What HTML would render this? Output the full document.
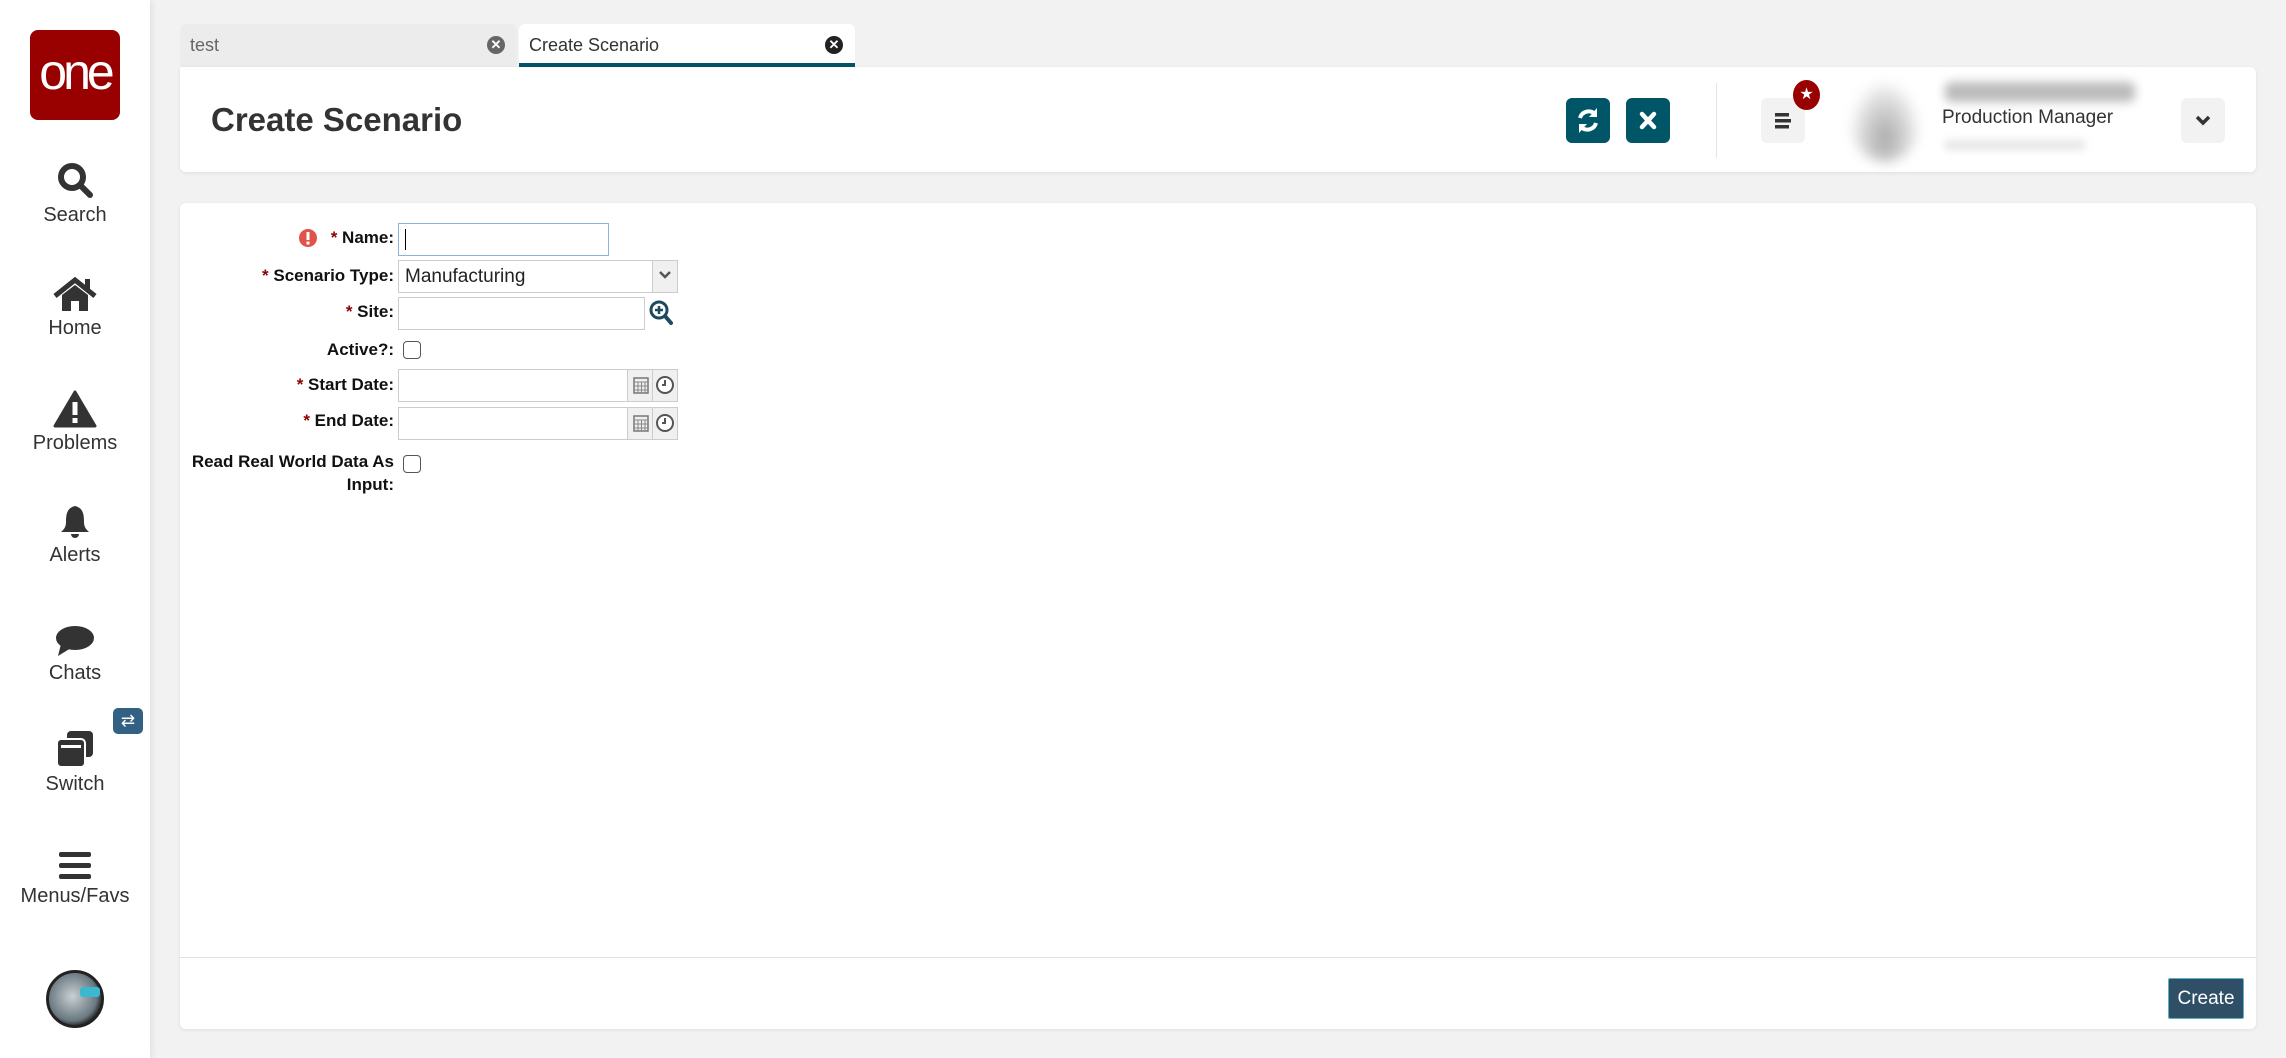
<!DOCTYPE html>
<html><head><meta charset="utf-8"><style>
*{box-sizing:border-box;margin:0;padding:0}
body{width:2286px;height:1058px;background:#f2f2f2;font-family:"Liberation Sans",sans-serif;position:relative;overflow:hidden;color:#333}
.abs{position:absolute}
.side{left:0;top:0;width:150px;height:1058px;background:#fff;box-shadow:2px 0 6px rgba(0,0,0,.08)}
.logo{left:30px;top:30px;width:90px;height:90px;background:#990000;border-radius:8px;color:#fff;font-size:50px;text-align:center;line-height:84px;letter-spacing:-4px}
.nav{left:0;width:150px;text-align:center;font-size:20px;color:#333}
.nav svg{display:block;margin:0 auto 4px}
.tab{top:24px;height:43px;border-radius:6px 6px 0 0;font-size:18px;line-height:43px;padding-left:10px}
.tx{position:absolute;right:12px;top:12px;width:18px;height:18px;border-radius:50%;color:#fff;font-size:13px;line-height:18px;text-align:center;padding:0;font-weight:bold}
.card{background:#fff;border-radius:6px;box-shadow:0 1px 4px rgba(0,0,0,.08)}
.btn{width:44px;height:45px;border-radius:6px;background:#005566}
.lbl{right:calc(2286px - 394px);font-size:17px;font-weight:bold;color:#111;text-align:right;white-space:nowrap}
.req{color:#8b0000}
.inp{border:1px solid #ccc;background:#fff;height:33px}
.cb{width:18px;height:18px;border:1.5px solid #555;border-radius:4px;background:#fff}
.addon{background:#f0f0f0;border-left:1px solid #ccc;height:31px;top:0}
</style></head><body>
<div class="abs side"></div>
<div class="abs logo">one</div>
<div class="abs nav" style="top:160px"><svg width="40" height="40" viewBox="0 0 40 40"><circle cx="17" cy="17" r="11" fill="none" stroke="#333" stroke-width="6"/><line x1="25" y1="25" x2="35" y2="35" stroke="#333" stroke-width="6" stroke-linecap="round"/></svg>Search</div>
<div class="abs nav" style="top:277px"><svg width="44" height="36" viewBox="0 0 44 36"><path d="M2 19 L22 3 L42 19" fill="none" stroke="#333" stroke-width="5"/><rect x="32" y="2" width="5" height="12" fill="#333"/><path d="M9 18 L22 8 L35 18 V34 H26 V24 H18 V34 H9Z" fill="#333"/></svg>Home</div>
<div class="abs nav" style="top:390px"><svg width="44" height="38" viewBox="0 0 44 38"><path d="M22 2 L42 36 H2Z" fill="#333" stroke="#333" stroke-width="3" stroke-linejoin="round"/><rect x="19.5" y="12" width="5" height="13" fill="#fff"/><rect x="19.5" y="28" width="5" height="5" fill="#fff"/></svg>Problems</div>
<div class="abs nav" style="top:504px"><svg width="36" height="36" viewBox="0 0 36 36"><path d="M18 2 C10 4 9 10 9 18 C9 24 6 26 4 28 H32 C30 26 27 24 27 18 C27 10 26 4 18 2Z" fill="#333"/><path d="M14 30 A4 4 0 0 0 22 30Z" fill="#333"/></svg>Alerts</div>
<div class="abs nav" style="top:624px"><svg width="40" height="34" viewBox="0 0 40 34"><ellipse cx="20" cy="14" rx="19" ry="12" fill="#333"/><path d="M6 20 L3 32 L16 24Z" fill="#333"/></svg>Chats</div>
<div class="abs nav" style="top:731px"><svg width="40" height="38" viewBox="0 0 40 38"><rect x="12" y="0" width="26" height="26" rx="4" fill="#333"/><rect x="2" y="8" width="28" height="28" rx="4" fill="#333" stroke="#fff" stroke-width="2"/><rect x="6" y="14" width="20" height="3" fill="#fff"/></svg>Switch</div>
<div class="abs" style="left:113px;top:708px;width:30px;height:26px;background:#336183;border-radius:5px;color:#fff;font-size:17px;text-align:center;line-height:26px">⇄</div>
<div class="abs nav" style="top:851px"><svg width="34" height="30" viewBox="0 0 34 30"><rect x="1" y="1" width="32" height="5" rx="2" fill="#333"/><rect x="1" y="12" width="32" height="5" rx="2" fill="#333"/><rect x="1" y="23" width="32" height="5" rx="2" fill="#333"/></svg>Menus/Favs</div>
<div class="abs" style="left:46px;top:970px;width:58px;height:58px;border-radius:50%;background:radial-gradient(circle at 45% 45%,#c8d0d4,#6a7880 60%,#222 75%);border:3px solid #222"></div>
<div class="abs" style="left:80px;top:987px;width:20px;height:10px;background:#3ab8d0;border-radius:3px"></div>

<div class="abs tab" style="left:180px;width:337px;background:#ececec;color:#666">test<span class="tx" style="background:#666">✕</span></div>
<div class="abs tab" style="left:519px;width:336px;background:#fff;color:#333;border-bottom:4px solid #005566">Create Scenario<span class="tx" style="background:#222">✕</span></div>

<div class="abs card" style="left:180px;top:67px;width:2076px;height:105px;border-radius:0 6px 6px 6px"></div>
<div class="abs" style="left:211px;top:101px;font-size:33px;font-weight:bold;color:#333">Create Scenario</div>
<div class="abs btn" style="left:1566px;top:98px"><svg width="44" height="45" viewBox="0 0 44 45"><path d="M14 20 A9 9 0 0 1 29 16" fill="none" stroke="#fff" stroke-width="4"/><path d="M31 10 V19 H23Z" fill="#fff"/><path d="M30 25 A9 9 0 0 1 15 29" fill="none" stroke="#fff" stroke-width="4"/><path d="M13 35 V26 H21Z" fill="#fff"/></svg></div>
<div class="abs btn" style="left:1626px;top:98px"><svg width="44" height="45" viewBox="0 0 44 45"><path d="M16 16 L28 29 M28 16 L16 29" stroke="#fff" stroke-width="4.5" stroke-linecap="round"/></svg></div>
<div class="abs" style="left:1716px;top:83px;width:1px;height:75px;background:#e4e4e4"></div>
<div class="abs" style="left:1761px;top:98px;width:44px;height:45px;background:#f2f2f2;border-radius:6px"><svg width="44" height="45" viewBox="0 0 44 45"><rect x="14" y="15" width="14" height="3.5" fill="#333"/><rect x="14" y="21" width="16" height="3.5" fill="#333"/><rect x="14" y="27" width="14" height="3.5" fill="#333"/></svg></div>
<div class="abs" style="left:1793px;top:80px;width:27px;height:30px;border-radius:50%;background:#990000;color:#fff;font-size:16px;text-align:center;line-height:30px">★</div>
<div class="abs" style="left:1850px;top:82px;width:70px;height:80px;border-radius:50%;background:radial-gradient(ellipse at 50% 70%,#aaa,#ddd 50%,#fff 75%);filter:blur(6px)"></div>
<div class="abs" style="left:1945px;top:82px;width:190px;height:20px;background:#bbb;filter:blur(5px);border-radius:6px"></div>
<div class="abs" style="left:1942px;top:107px;font-size:19px;color:#333">Production Manager</div>
<div class="abs" style="left:1945px;top:140px;width:140px;height:10px;background:#e6e6e6;filter:blur(4px)"></div>
<div class="abs" style="left:2181px;top:98px;width:44px;height:45px;background:#f2f2f2;border-radius:6px"><svg width="44" height="45" viewBox="0 0 44 45"><path d="M16 19 L22 25 L28 19" fill="none" stroke="#333" stroke-width="3.5"/></svg></div>

<div class="abs card" style="left:180px;top:203px;width:2076px;height:826px"></div>
<div class="abs" style="left:180px;top:957px;width:2076px;height:1px;background:#e0e0e0"></div>
<div class="abs" style="left:2168px;top:978px;width:76px;height:41px;background:#2e4f66;border:1px solid #5ab0c8;border-radius:2px;color:#fff;font-size:19px;text-align:center;line-height:39px">Create</div>

<svg class="abs" style="left:298px;top:228px" width="20" height="20"><circle cx="10" cy="10" r="9" fill="#e0534a"/><rect x="8.5" y="4" width="3" height="8" fill="#fff"/><rect x="8.5" y="13.5" width="3" height="3" fill="#fff"/></svg>
<div class="abs lbl" style="top:228px"><span class="req">*</span> Name:</div>
<div class="abs inp" style="left:398px;top:223px;width:211px;border-color:#8fb0d8"><div style="position:absolute;left:6px;top:5px;width:1px;height:21px;background:#000"></div></div>
<div class="abs lbl" style="top:266px"><span class="req">*</span> Scenario Type:</div>
<div class="abs inp" style="left:398px;top:260px;width:280px;font-size:19px;padding:5px 6px;color:#222">Manufacturing<div class="abs addon" style="right:0;width:25px;text-align:center"><svg width="14" height="30"><path d="M2 11 L7 16 L12 11" fill="none" stroke="#555" stroke-width="2.5"/></svg></div></div>
<div class="abs lbl" style="top:302px"><span class="req">*</span> Site:</div>
<div class="abs inp" style="left:398px;top:297px;width:247px"></div>
<svg class="abs" style="left:648px;top:299px" width="26" height="28"><circle cx="11" cy="11" r="8" fill="none" stroke="#1d4a5e" stroke-width="3"/><path d="M11 7 V15 M7 11 H15" stroke="#1d4a5e" stroke-width="2.5"/><path d="M17 17 L23 24" stroke="#1d4a5e" stroke-width="4" stroke-linecap="round"/></svg>
<div class="abs lbl" style="top:340px">Active?:</div>
<div class="abs cb" style="left:403px;top:341px"></div>
<div class="abs lbl" style="top:375px"><span class="req">*</span> Start Date:</div>
<div class="abs inp" style="left:398px;top:369px;width:280px"><div class="abs addon" style="right:25px;width:25px"><svg width="25" height="31"><rect x="6" y="8" width="14" height="15" fill="#eee" stroke="#777" stroke-width="1.5"/><path d="M6 12 H20 M6 16 H20 M6 20 H20 M10 12 V23 M13.5 12 V23 M17 12 V23" stroke="#888"/></svg></div><div class="abs addon" style="right:0;width:25px"><svg width="25" height="31"><circle cx="12" cy="15" r="8" fill="#fff" stroke="#555" stroke-width="2"/><path d="M12 10 V15 H9" fill="none" stroke="#555" stroke-width="2"/></svg></div></div>
<div class="abs lbl" style="top:411px"><span class="req">*</span> End Date:</div>
<div class="abs inp" style="left:398px;top:407px;width:280px"><div class="abs addon" style="right:25px;width:25px"><svg width="25" height="31"><rect x="6" y="8" width="14" height="15" fill="#eee" stroke="#777" stroke-width="1.5"/><path d="M6 12 H20 M6 16 H20 M6 20 H20 M10 12 V23 M13.5 12 V23 M17 12 V23" stroke="#888"/></svg></div><div class="abs addon" style="right:0;width:25px"><svg width="25" height="31"><circle cx="12" cy="15" r="8" fill="#fff" stroke="#555" stroke-width="2"/><path d="M12 10 V15 H9" fill="none" stroke="#555" stroke-width="2"/></svg></div></div>
<div class="abs lbl" style="top:450px;line-height:23px">Read Real World Data As<br>Input:</div>
<div class="abs cb" style="left:403px;top:455px"></div>
</body></html>
